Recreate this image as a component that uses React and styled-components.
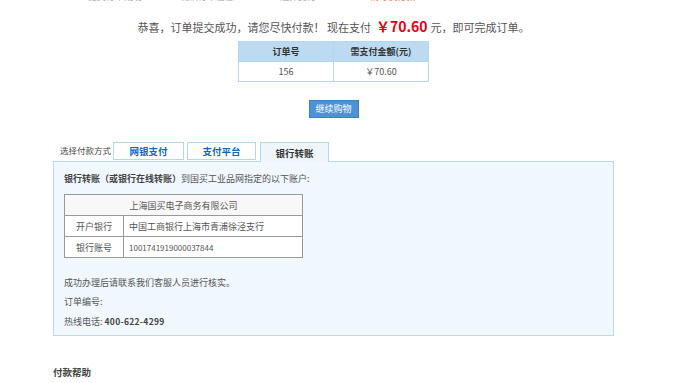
import React from "react";
import styled, { createGlobalStyle } from "styled-components";

const Global = createGlobalStyle`
  html, body { margin: 0; padding: 0; background: #fff; }
  body { font-family: "Noto Sans CJK SC", "Liberation Sans", sans-serif; color: #555; overflow: hidden; }
`;

const Page = styled.div`
  width: 561px;
  margin-left: 53px;
  display: flex;
  flex-direction: column;
  align-items: center;
`;

const Steps = styled.div`
  width: 100%;
  height: 4px;
  overflow: hidden;
`;

const StepsInner = styled.div`
  display: flex;
  margin-top: -9px;
  font-size: 9px;
  line-height: 12px;
  padding-left: 35px;
`;

const Step = styled.span`
  width: ${(p) => p.$w}px;
  color: ${(p) => (p.$active ? "#f06060" : "#aaa")};
`;

const Headline = styled.div`
  margin-top: 14px;
  font-size: 11px;
  line-height: 16px;
  color: #555;
  white-space: nowrap;
  display: flex;
  align-items: baseline;
`;

const Price = styled.span`
  color: #e60012;
  font-weight: bold;
  font-size: 14px;
  margin: 0 3px 0 5px;
`;

const OrderTable = styled.table`
  margin-top: 6px;
  width: 191px;
  table-layout: fixed;
  border-collapse: collapse;
  font-size: 9px;
  td, th {
    width: 50%;
    border: 1px solid #b4d6ef;
    height: 19px;
    text-align: center;
    padding: 0;
  }
  th {
    background: #bcdaf1;
    color: #333;
    font-weight: bold;
  }
  td { color: #555; }
`;

const Button = styled.button`
  margin-top: 18px;
  width: 50px;
  height: 18px;
  border: 1px solid #3f80c4;
  background: #4c92d6;
  color: #fff;
  font-family: inherit;
  font-size: 9px;
  padding: 0;
  line-height: 16px;
`;

const TabsRow = styled.div`
  margin-top: 23px;
  width: 100%;
  display: flex;
  align-items: flex-end;
  height: 20px;
  position: relative;
  z-index: 1;
`;

const TabsLabel = styled.span`
  box-sizing: border-box;
  flex-shrink: 0;
  white-space: nowrap;
  font-size: 8.5px;
  color: #444;
  width: 60px;
  padding-left: 7px;
  line-height: 18px;
  align-self: center;
  margin-top: -2px;
`;

const Tab = styled.div`
  flex-shrink: 0;
  width: ${(p) => p.$w}px;
  height: ${(p) => (p.$active ? 20 : 18)}px;
  margin-right: ${(p) => p.$mr}px;
  box-sizing: border-box;
  border: 1px solid #b4d6ef;
  border-bottom: ${(p) => (p.$active ? "none" : "1px solid #b4d6ef")};
  background: ${(p) => (p.$active ? "#eef6fc" : "#fff")};
  color: ${(p) => (p.$active ? "#333" : "#1565b8")};
  font-weight: bold;
  font-size: 9.5px;
  display: flex;
  align-items: center;
  justify-content: center;
  margin-bottom: ${(p) => (p.$active ? -1 : 1)}px;
`;

const Panel = styled.div`
  width: 100%;
  box-sizing: border-box;
  height: 175px;
  border: 1px solid #b9d9f0;
  background: #f0f7fd;
  padding: 10px 10px 0 10px;
  font-size: 9px;
  color: #555;
`;

const Intro = styled.div`
  line-height: 14px;
  strong { color: #444; }
`;

const BankTable = styled.table`
  margin-top: 8px;
  width: 239px;
  border-collapse: collapse;
  background: #fff;
  font-size: 9px;
  td {
    border: 1px solid #999;
    height: 20px;
    padding: 0;
    color: #555;
  }
`;

const HeadCell = styled.td`
  text-align: center;
  background: #f8f8f8;
`;

const LabelCell = styled.td`
  width: 58px;
  text-align: center;
`;

const ValueCell = styled.td`
  padding-left: 5px !important;
  font-size: ${(p) => (p.$small ? 8 : 9)}px;
`;

const Notes = styled.div`
  margin-top: 18px;
  display: flex;
  flex-direction: column;
  gap: 5px;
  line-height: 14px;
`;

const Mono = styled.span`
  font-weight: bold;
  color: #444;
  font-size: 8.5px;
  letter-spacing: 0.3px;
`;

const Help = styled.div`
  margin-top: 29px;
  align-self: flex-start;
  font-size: 9.5px;
  font-weight: bold;
  color: #444;
`;

export default function App() {
  return (
    <>
      <Global />
      <Page>
        <Steps>
          <StepsInner>
            <Step $w={92}>提交订单成功</Step>
            <Step $w={100}>确认订单信息</Step>
            <Step $w={90}>选择支付</Step>
            <Step $w={100} $active>请尽快付款</Step>
          </StepsInner>
        </Steps>
        <Headline>
          恭喜，订单提交成功，请您尽快付款！ 现在支付<Price>￥70.60</Price>元，即可完成订单。
        </Headline>
        <OrderTable>
          <thead>
            <tr>
              <th>订单号</th>
              <th>需支付金额(元)</th>
            </tr>
          </thead>
          <tbody>
            <tr>
              <td>156</td>
              <td>￥70.60</td>
            </tr>
          </tbody>
        </OrderTable>
        <Button>继续购物</Button>
        <TabsRow>
          <TabsLabel>选择付款方式</TabsLabel>
          <Tab $w={71} $mr={3}>网银支付</Tab>
          <Tab $w={69} $mr={4}>支付平台</Tab>
          <Tab $w={69} $mr={0} $active>银行转账</Tab>
        </TabsRow>
        <Panel>
          <Intro>
            <strong>银行转账（或银行在线转账）</strong>到国买工业品网指定的以下账户:
          </Intro>
          <BankTable>
            <tbody>
              <tr>
                <HeadCell colSpan={2}>上海国买电子商务有限公司</HeadCell>
              </tr>
              <tr>
                <LabelCell>开户银行</LabelCell>
                <ValueCell>中国工商银行上海市青浦徐泾支行</ValueCell>
              </tr>
              <tr>
                <LabelCell>银行账号</LabelCell>
                <ValueCell $small>1001741919000037844</ValueCell>
              </tr>
            </tbody>
          </BankTable>
          <Notes>
            <div>成功办理后请联系我们客服人员进行核实。</div>
            <div>订单编号:</div>
            <div>
              热线电话: <Mono>400-622-4299</Mono>
            </div>
          </Notes>
        </Panel>
        <Help>付款帮助</Help>
      </Page>
    </>
  );
}
